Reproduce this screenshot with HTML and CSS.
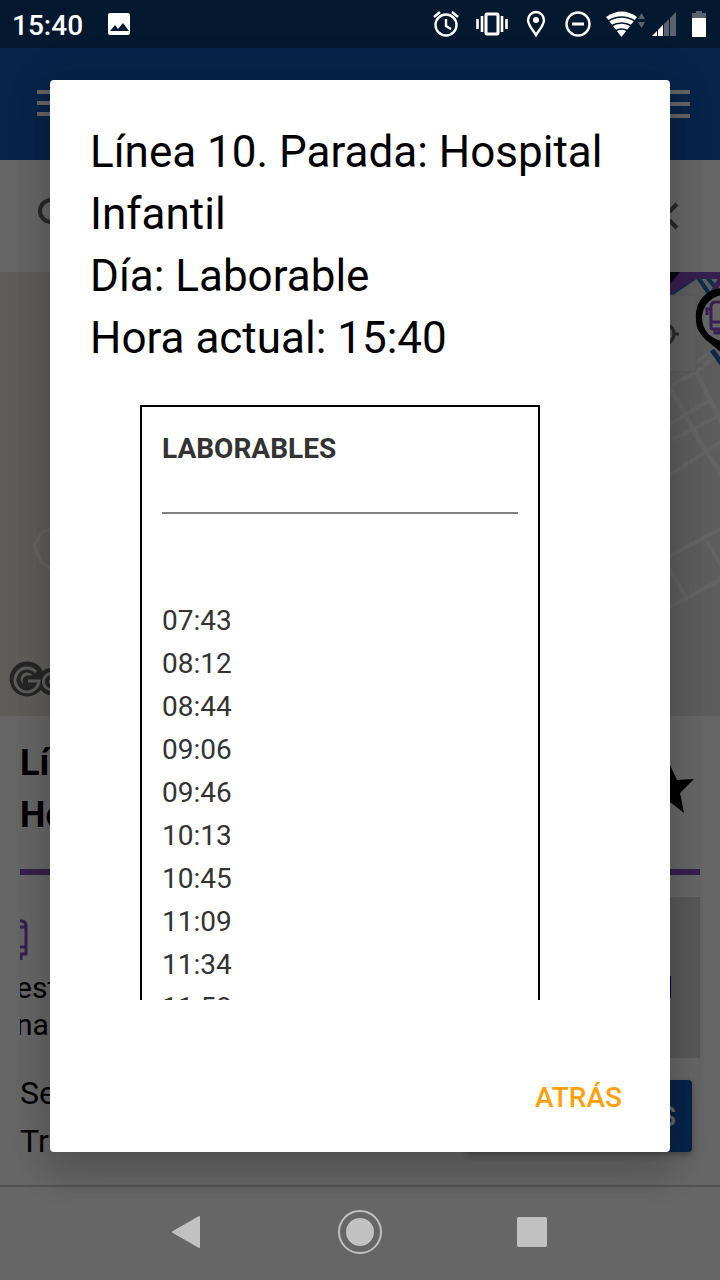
FILE: index.html
```html
<!DOCTYPE html>
<html lang="es">
<head>
<meta charset="utf-8">
<meta name="viewport" content="width=device-width, initial-scale=1">
<title>Horarios de parada</title>
<link rel="stylesheet" href="styles.css">
</head>
<body>
<div class="screen">
  <header class="status">
    <span class="clock">15:40</span>
    <svg class="status-photo" width="24" height="24" viewBox="0 0 24 24"><rect x="1" y="1" width="22" height="22" rx="2" fill="#fff"/><path d="M3 19l5-6 3 4 5-6 6 8z" fill="#04182f"/></svg>
    <svg class="status-icons" width="276" height="32" viewBox="432 8 276 32" fill="none" stroke="#fff" stroke-width="2.4">
      <circle cx="446" cy="25" r="10.5"/><path d="M446 19v7l5 3M434 17l6-5M458 17l-6-5"/>
      <rect x="486" y="14" width="12" height="20" rx="1" stroke-width="3"/><path d="M482 16v16M502 16v16M477.500 19v10M506.500 19v10" stroke-width="2.6"/>
      <path d="M536 35c-4-6-8-10-8-15a8 8 0 0 1 16 0c0 5-4 9-8 15z"/><circle cx="536" cy="20" r="3" fill="#fff" stroke="none"/>
      <circle cx="578" cy="24" r="11.5"/><path d="M572 24h12" stroke-width="3"/>
      <path d="M606 17q16-11 31 0L621.500 37z" fill="#fff" stroke="none"/>
      <path d="M608 21q13.500-8 27 0M611 26q10.500-6 21 0M615 31q6.500-4 13 0" stroke="#04182f" stroke-width="1.500"/>
      <path d="M638 19l3.500-6 3.500 6zM638 22l3.500 6 3.500-6z" fill="#59636f" stroke="none"/>
      <path d="M652 36l24-24v24z" fill="#59636f" stroke="none"/><path d="M652 36l11-11v11z" fill="#fff" stroke="none"/>
      <path d="M657.500 28v9M663.500 22v15M669.500 16v21" stroke="#04182f" stroke-width="1"/>
      <path d="M692 18v-5h4v-2h6v2h4v5z" fill="#59636f" stroke="none"/><path d="M692 18h14v19h-14z" fill="#fff" stroke="none"/>
    </svg>
  </header>

  <div class="toolbar">
    <svg width="30" height="30" viewBox="0 0 30 30"><path d="M0 3h30M0 14h30M0 25h30" stroke="#656565" stroke-width="4"/></svg>
    <svg width="30" height="30" viewBox="0 0 30 30"><path d="M0 3h30M0 15h30M0 27h30" stroke="#656565" stroke-width="4"/></svg>
  </div>

  <div class="search">
    <svg width="36" height="36" viewBox="0 0 36 36" fill="none" stroke="#282828" stroke-width="4"><circle cx="13" cy="13" r="11"/><path d="M21 21l12 12"/></svg>
    <svg width="28" height="28" viewBox="0 0 28 28" fill="none" stroke="#282828" stroke-width="4"><path d="M2 2l24 24M26 2L2 26"/></svg>
  </div>

  <div class="map">
    <svg class="map-left" width="60" height="444" viewBox="0 0 60 444" fill="none">
      <path d="M56 256l-14 4-8 14 7 16 17 12" stroke="#646464" stroke-width="3"/>
      <path d="M37 400a12 12 0 1 0 2 9H28M58 405a8 8 0 1 0 0 9" stroke="#262626" stroke-width="11" stroke-linecap="round"/>
      <path d="M36 400a12 12 0 1 0 3 9H28M58 405a8 8 0 1 0 0 9" stroke="#5c5c5c" stroke-width="3"/>
    </svg>
    <svg class="map-right" width="60" height="444" viewBox="660 272 60 444" fill="none">
      <g stroke="#636363" stroke-width="4">
        <path d="M670 387l30 55 22 33M694 368l28 55" stroke-width="5"/>
        <path d="M670 475l52-34M672 440l48-25M670 424l40-24M672 385l32-18M704 365l18-12"/>
        <path d="M668 557l54-29M668 608l54-29M706 540l16 28M668 566l17 30M670 348l52-28M680 374l40-29"/>
      </g>
      <path d="M668 296l29-20M697 276l18 26M706 276l14 17" stroke="#0b304b" stroke-width="4"/>
      <path d="M668 272h52v7h-25l-27 17z" fill="#36204f"/><path d="M668 272h12l-12 14z" fill="#07090d"/>
      <path d="M713 292l9-16" stroke="#36204f" stroke-width="5"/>
      <rect x="650" y="295" width="46" height="77" rx="2" fill="#616161" stroke="#585858"/>
      <circle cx="664" cy="334" r="10" stroke="#292929" stroke-width="3"/><path d="M673 334h6" stroke="#292929" stroke-width="3"/>
      <path d="M712 350l10 14" stroke="#11274c" stroke-width="5"/>
      <path d="M722 288c-18 2-27 15-26 31 0 10 4 15 10 21l16 13z" fill="#000"/><circle cx="725" cy="318" r="23" fill="#646464"/>
      <path d="M722 302h-7q-4 0-4 5v20q0 2 3 2h8M711 322h10M710 309h-3v6M715 329v4h4v-4" stroke="#36204f" stroke-width="3"/>
    </svg>
  </div>

  <main class="details">
    <div class="stop-head">
      <h1 class="stop-name">Lí<br>Ho</h1>
      <svg width="48" height="48" viewBox="0 0 48 48"><path d="M24 0l7 15 17-1-14 14 4 20-14-11-16 11 5-19L0 15l18 1z"/></svg>
    </div>
    <div class="arrivals">
      <div class="arrival">
        <svg width="8" height="42" viewBox="0 0 8 42" fill="none" stroke="#36204f" stroke-width="3"><path d="M0 2h2q4 0 4 6v27H1v6M0 28h6M0 8h5"/></svg>
        <p class="arrival-text">est<br>na</p>
      </div>
      <div class="arrival-box">l</div>
    </div>
    <div class="selection">
      <p class="selection-text">Se<br>Tr</p>
      <button class="schedule" type="button">S</button>
    </div>
  </main>

  <nav class="nav">
    <button class="nav-button" type="button" aria-label="Volver"><svg width="44" height="44" viewBox="0 0 44 44"><path d="M7 22L33 7v30z" fill="#c1c1c1" stroke="#c1c1c1" stroke-width="2" stroke-linejoin="round"/></svg></button>
    <button class="nav-button" type="button" aria-label="Inicio"><svg width="44" height="44" viewBox="0 0 44 44"><circle cx="22" cy="22" r="21" fill="none" stroke="#c1c1c1" stroke-width="2"/><circle cx="22" cy="22" r="14" fill="#c1c1c1"/></svg></button>
    <button class="nav-button" type="button" aria-label="Recientes"><svg width="44" height="44" viewBox="0 0 44 44"><rect x="7" y="7" width="30" height="30" rx="2" fill="#c1c1c1"/></svg></button>
  </nav>

  <section class="dialog" role="dialog" aria-modal="true" aria-labelledby="dialog-title">
    <h2 class="dialog-title" id="dialog-title">Línea 10. Parada: Hospital Infantil<br>Día: Laborable<br>Hora actual: 15:40</h2>
    <div class="scroll">
      <div class="timetable">
        <h3 class="timetable-title">LABORABLES</h3>
        <hr class="rule">
        <ul class="times">
          <li>07:43</li><li>08:12</li><li>08:44</li><li>09:06</li><li>09:46</li>
          <li>10:13</li><li>10:45</li><li>11:09</li><li>11:34</li><li>11:58</li>
        </ul>
      </div>
    </div>
    <div class="actions"><button class="back" type="button">ATRÁS</button></div>
  </section>
</div>
</body>
</html>
```
FILE: styles.css
```css
* { box-sizing: border-box; }
body { margin: 0; background: #666; font-family: Roboto, "Liberation Sans", sans-serif; }
h1, h2, h3, p, ul { margin: 0; padding: 0; }
svg { display: block; flex: none; }
button { border: 0; font-family: inherit; }

.screen { position: relative; min-height: 100vh; display: flex; flex-direction: column; overflow: hidden; }

.status { height: 48px; padding: 0 12px; display: flex; align-items: center; background: #04182f; color: #fff; }
.clock { padding-top: 2px; font-size: 28px; font-weight: 500; }
.status-photo { margin-left: 24px; }
.status-icons { margin-left: auto; }

.toolbar { height: 112px; padding: 0 30px 0 37px; display: flex; align-items: center; justify-content: space-between; background: #08244a; }
.search { height: 112px; padding: 0 41px 0 38px; display: flex; align-items: center; justify-content: space-between; background: #666; }

.map { flex: 1; display: flex; justify-content: space-between; background: #5d5d5d; }
.map-left { background: #5e5d5a; }

.details { padding: 21px 20px 20px; display: flex; flex-direction: column; color: #000; }
.stop-head { height: 138px; padding-right: 6px; display: flex; justify-content: space-between; align-items: flex-start; border-bottom: 6px solid #36204f; }
.stop-head svg { margin-top: 28px; }
.stop-name { font-size: 36px; line-height: 52px; font-weight: 700; }
.arrivals { margin-top: 22px; height: 161px; display: flex; justify-content: space-between; }
.arrival { padding-top: 22px; overflow: hidden; }
.arrival-text { margin: 8px 0 0 -4px; font-size: 30px; line-height: 37px; }
.arrival-box { width: 200px; padding: 72px 27px 0 0; background: #585858; text-align: right; font-size: 30px; line-height: 38px; }
.selection { margin-top: 11px; padding-right: 8px; display: flex; align-items: flex-start; justify-content: space-between; }
.selection-text { font-size: 32px; line-height: 48px; }
.schedule { margin-top: 11px; width: 226px; height: 72px; padding: 0 16px; border-radius: 4px; background: #08244a; color: #656565; font-size: 28px; font-weight: 500; text-align: right; box-shadow: 0 3px 6px rgba(0, 0, 0, .3); }

.nav { height: 95px; padding: 0 102px 4px; display: flex; justify-content: space-around; align-items: center; border-top: 2px solid #525252; background: #666; }
.nav-button { padding: 0; background: none; }

.dialog { position: absolute; inset: 80px 50px 128px; display: flex; flex-direction: column; border-radius: 4px; background: #fff; color: #000; box-shadow: 0 22px 30px 6px rgba(0, 0, 0, .12), 0 0 48px rgba(0, 0, 0, .12); }
.dialog-title { padding: 41px 40px 0; font-size: 44px; line-height: 62px; font-weight: 400; }
.scroll { flex: 1; min-height: 0; margin-top: 36px; padding: 0 130px 0 90px; overflow: hidden; }
.timetable { padding: 20px; border: 2px solid #000; background: #fff; color: #333; }
.timetable-title { font-size: 28px; line-height: 43px; font-weight: 700; }
.rule { margin: 42px 0 85px; border: 0; border-top: 2px solid #808080; }
.times { list-style: none; font-size: 28px; line-height: 43px; }
.actions { height: 152px; padding: 42px 32px 0 0; display: flex; justify-content: flex-end; align-items: center; flex: none; }
.back { height: 60px; padding: 0 16px; background: none; color: #ff9f0a; font-size: 28px; font-weight: 500; }
```
